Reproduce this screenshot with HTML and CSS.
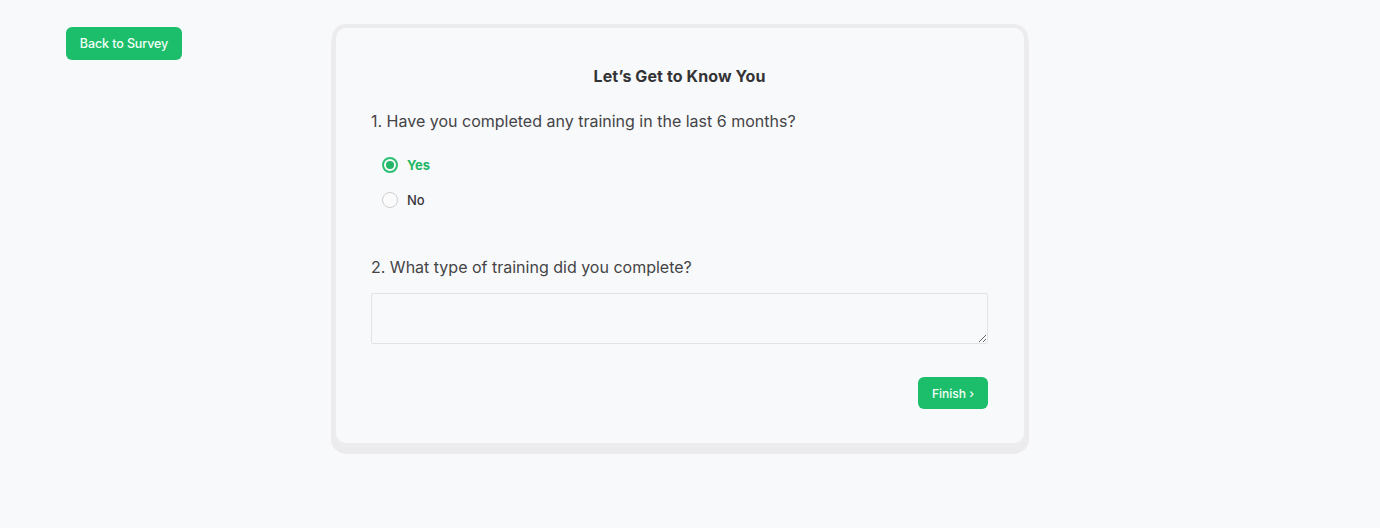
FILE: index.html
```html
<!DOCTYPE html>
<html lang="en">
<head>
<meta charset="utf-8">
<title>Let's Get to Know You</title>
<link rel="stylesheet" href="styles.css">
</head>
<body>
<div class="page">
  <div class="side">
    <button class="btn btn-back" type="button">Back to Survey</button>
  </div>
  <main class="card">
    <h1 class="title">Let’s Get to Know You</h1>
    <p class="question">1. Have you completed any training in the last 6 months?</p>
    <div class="options">
      <label class="option selected"><span class="radio"></span><span>Yes</span></label>
      <label class="option"><span class="radio"></span><span>No</span></label>
    </div>
    <p class="question q2">2. What type of training did you complete?</p>
    <textarea class="answer"></textarea>
    <div class="actions">
      <button class="btn btn-finish" type="button">Finish ›</button>
    </div>
  </main>
</div>
</body>
</html>
```
FILE: styles.css
```css
* { box-sizing: border-box; }
html, body { margin: 0; padding: 0; }
body {
  background: #f8f9fb;
  font-family: Inter, "Liberation Sans", Arial, sans-serif;
  color: #3a3a3c;
  width: 1380px;
  height: 528px;
  overflow: hidden;
}
.page {
  display: flex;
  align-items: flex-start;
  padding: 27px 0 0 66px;
  gap: 154px;
}
.side { width: 116px; }
.btn {
  border: none;
  background: #1dbe6b;
  color: #f4fff8;
  font-family: inherit;
  font-weight: 500;
  border-radius: 6px;
  cursor: pointer;
  padding: 0;
}
.btn-back {
  width: 116px;
  height: 33px;
  font-size: 12.5px;
  letter-spacing: -0.1px;
}
.card {
  margin-top: 1px;
  width: 688px;
  background: #f8f9fb;
  border-radius: 10px;
  box-shadow: 0 0 0 4px #ececee, 0 6px 0 5px #ebebed;
  padding: 38px 36px 34px 35px;
}
.title {
  margin: 0;
  font-size: 16px;
  line-height: 20px;
  font-weight: 700;
  text-align: center;
  color: #333335;
  letter-spacing: 0.1px;
}
.question {
  margin: 23px 0 0;
  font-size: 16px;
  line-height: 24px;
  color: #444446;
}
.q2 { margin-top: 45px; }
.options {
  margin-top: 22px;
  padding-left: 11px;
  display: flex;
  flex-direction: column;
  gap: 15px;
}
.option {
  display: flex;
  align-items: center;
  gap: 9px;
  height: 20px;
  font-size: 13px;
  font-weight: 500;
  color: #38383a;
}
.radio {
  width: 16px;
  height: 16px;
  border-radius: 50%;
  border: 1px solid #cfd0d3;
  background: #fbfbfc;
  display: flex;
  align-items: center;
  justify-content: center;
}
.option.selected { color: #22b766; font-weight: 700; }
.option.selected .radio {
  border: 2px solid #2cc074;
  background: #f8f9fb;
}
.option.selected .radio::after {
  content: "";
  width: 8px;
  height: 8px;
  border-radius: 50%;
  background: #22b766;
}
.answer {
  display: block;
  margin-top: 14px;
  width: 617px;
  height: 51px;
  background: #f8f9fb;
  border: 1px solid #e3e3e6;
  border-radius: 2px;
  resize: vertical;
  font-family: inherit;
}
.actions {
  margin-top: 33px;
  display: flex;
  justify-content: flex-end;
}
.btn-finish {
  width: 70px;
  height: 32px;
  font-size: 12px;
}
```
